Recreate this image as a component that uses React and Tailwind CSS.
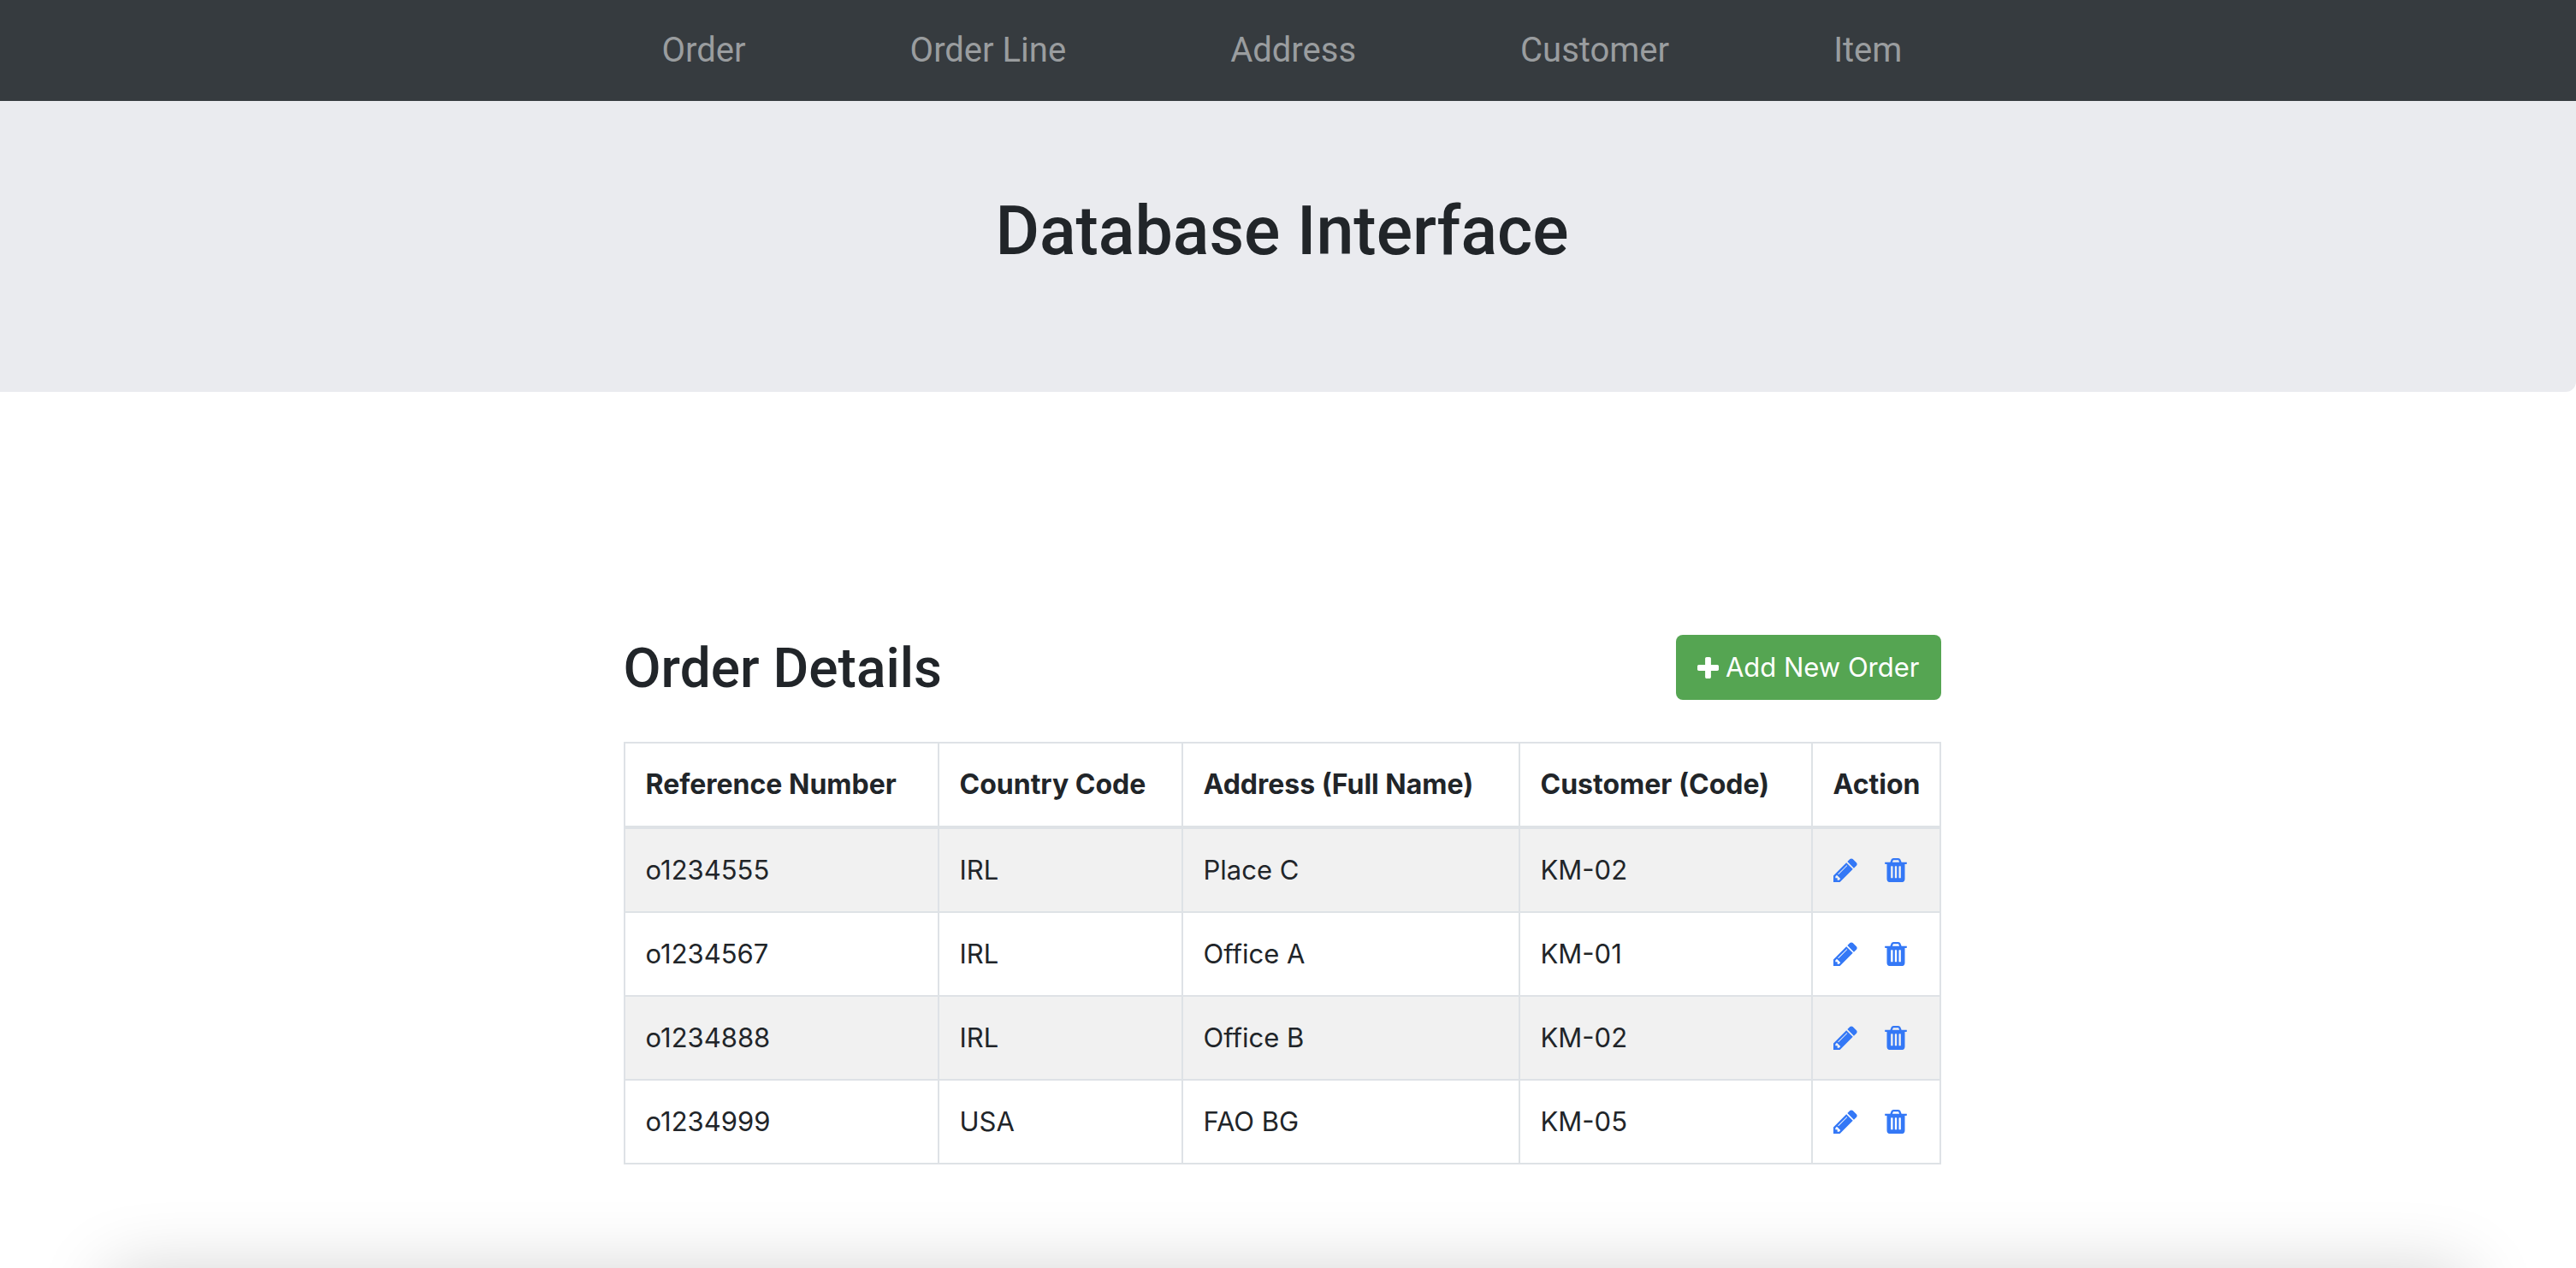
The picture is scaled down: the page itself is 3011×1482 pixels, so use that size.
import React, { useState } from "react";

const LINKS = ["Order", "Order Line", "Address", "Customer", "Item"];

const ORDERS = [
  { reference: "o1234555", country: "IRL", address: "Place C", customer: "KM-02" },
  { reference: "o1234567", country: "IRL", address: "Office A", customer: "KM-01" },
  { reference: "o1234888", country: "IRL", address: "Office B", customer: "KM-02" },
  { reference: "o1234999", country: "USA", address: "FAO BG", customer: "KM-05" }
];

const PlusIcon = () => (
  <svg className="size-[25px]" viewBox="192 128 1408 1408" fill="currentColor" aria-hidden="true">
    <path d="M1600 736v192q0 40-28 68t-68 28h-416v416q0 40-28 68t-68 28h-192q-40 0-68-28t-28-68v-416h-416q-40 0-68-28t-28-68v-192q0-40 28-68t68-28h416v-416q0-40 28-68t68-28h192q40 0 68 28t28 68v416h416q40 0 68 28t28 68z" />
  </svg>
);

const PencilIcon = () => (
  <svg className="size-7" viewBox="128 128 1536 1536" fill="currentColor" aria-hidden="true">
    <path d="M491 1536l91-91-235-235-91 91v107h128v128h107zm523-928q0-22-22-22-10 0-17 7l-542 542q-7 7-7 17 0 22 22 22 10 0 17-7l542-542q7-7 7-17zm-54-192l416 416-832 832h-416v-416zm683 96q0 53-37 90l-166 166-416-416 166-165q36-38 90-38 53 0 91 38l235 234q37 39 37 91z" />
  </svg>
);

const TrashIcon = () => (
  <svg className="h-7 w-[26px]" viewBox="192 128 1408 1536" fill="currentColor" aria-hidden="true">
    <path d="M704 1376v-704q0-14-9-23t-23-9h-64q-14 0-23 9t-9 23v704q0 14 9 23t23 9h64q14 0 23-9t9-23zm256 0v-704q0-14-9-23t-23-9h-64q-14 0-23 9t-9 23v704q0 14 9 23t23 9h64q14 0 23-9t9-23zm256 0v-704q0-14-9-23t-23-9h-64q-14 0-23 9t-9 23v704q0 14 9 23t23 9h64q14 0 23-9t9-23zm-544-992h448l-48-117q-7-9-17-11h-317q-10 2-17 11zm928 32v64q0 14-9 23t-23 9h-96v948q0 83-47 143.5t-113 60.5h-832q-66 0-113-58.5t-47-141.5v-952h-96q-14 0-23-9t-9-23v-64q0-14 9-23t23-9h309l70-167q15-37 54-63t79-26h320q40 0 79 26t54 63l70 167h309q14 0 23 9t9 23z" />
  </svg>
);

function App() {
  const [orders, setOrders] = useState(ORDERS);

  const handleDelete = reference => {
    setOrders(orders.filter(order => order.reference !== reference));
  };

  return (
    <div className="relative min-h-screen overflow-hidden bg-white font-['Inter',sans-serif] text-[31px] leading-[48px] text-[#212529]">
      <nav className="flex justify-center bg-[#363b3f] py-7 pr-3.5">
        <ul className="flex gap-48 font-['Roboto',sans-serif] text-[40px] leading-[62px] text-[#9a9d9f]">
          {LINKS.map(link => (
            <li key={link}>
              <a href="#">{link}</a>
            </li>
          ))}
        </ul>
      </nav>

      <header className="rounded-br-xl bg-[#eaebef] pt-[104px] pr-3.5 pb-[140px] text-center">
        <h1 className="font-['Roboto',sans-serif] text-[79px] leading-[96px] font-medium">
          Database Interface
        </h1>
      </header>

      <main className="pt-[284px] pr-3.5 pb-[117px]">
        <div className="mx-auto max-w-[1540px]">
          <div className="mb-[49px] flex items-center justify-between">
            <h2 className="pt-1 font-['Roboto',sans-serif] text-[64px] leading-[72px] font-medium">
              Order Details
            </h2>
            <button className="flex items-center gap-2 rounded-lg bg-[#55a552] px-[25px] py-[14px] text-white">
              <PlusIcon />
              Add New Order
            </button>
          </div>

          <table className="w-full table-fixed border-collapse border-2 border-[#dee2e6] text-left">
            <colgroup>
              <col />
              <col className="w-[285px]" />
              <col className="w-[394px]" />
              <col className="w-[342px]" />
              <col className="w-[150px]" />
            </colgroup>
            <thead>
              <tr className="border-b-4 border-[#dee2e6] text-[32px]">
                <th className="border-x-2 border-[#dee2e6] px-6 py-6">Reference Number</th>
                <th className="border-x-2 border-[#dee2e6] px-6 py-6">Country Code</th>
                <th className="border-x-2 border-[#dee2e6] px-6 py-6">Address (Full Name)</th>
                <th className="border-x-2 border-[#dee2e6] px-6 py-6">Customer (Code)</th>
                <th className="border-x-2 border-[#dee2e6] px-6 py-6">Action</th>
              </tr>
            </thead>
            <tbody>
              {orders.map(order => (
                <tr key={order.reference} className="border-b-2 border-[#dee2e6] odd:bg-[#f1f1f1]">
                  <td className="border-x-2 border-[#dee2e6] px-6 py-6">{order.reference}</td>
                  <td className="border-x-2 border-[#dee2e6] px-6 py-6">{order.country}</td>
                  <td className="border-x-2 border-[#dee2e6] px-6 py-6">{order.address}</td>
                  <td className="border-x-2 border-[#dee2e6] px-6 py-6">{order.customer}</td>
                  <td className="border-x-2 border-[#dee2e6] px-6 py-6">
                    <div className="flex items-center gap-8 text-[#3478f6]">
                      <button aria-label={`Edit ${order.reference}`}>
                        <PencilIcon />
                      </button>
                      <button
                        aria-label={`Delete ${order.reference}`}
                        onClick={() => handleDelete(order.reference)}
                      >
                        <TrashIcon />
                      </button>
                    </div>
                  </td>
                </tr>
              ))}
            </tbody>
          </table>
        </div>
      </main>

      {/* soft shadow rising from the bottom edge */}
      <div className="absolute inset-x-32 top-full h-24 shadow-[0_4px_84px_rgba(0,0,0,0.18)]" />
    </div>
  );
}

export default App;
